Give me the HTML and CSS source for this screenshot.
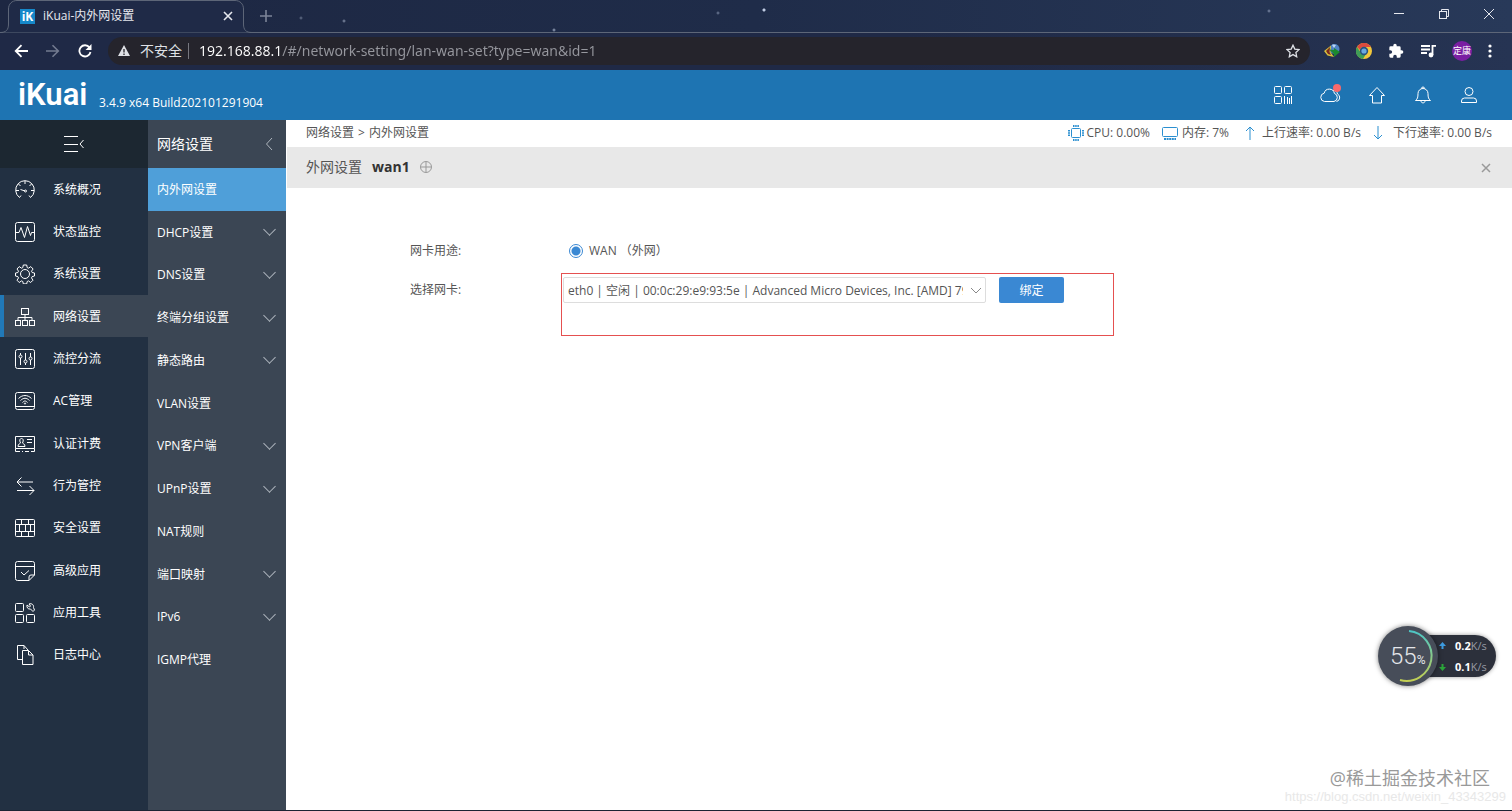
FILE: index.html
```html
<!DOCTYPE html>
<html lang="zh-CN">
<head>
    <meta charset="UTF-8">
    <meta name="viewport" content="width=device-width, initial-scale=1.0">
    <title>iKuai-内外网设置</title>
    <link rel="stylesheet" href="styles.css">
</head>
<body>
    <!-- browser frame -->
    <div class="tab-strip">
        <div class="tab">
            <svg class="tab-shape" width="252" height="33" viewBox="0 0 252 33"><path d="M0 32.500C6 32.500 8.500 30 8.500 24V9C8.500 4 12 .5 17 .5H235C240 .5 243.500 4 243.500 9V24C243.500 30 246 32.500 252 32.500" fill="#1f2a47" stroke="#5d6678"/></svg>
            <span class="favicon">iK</span>
            <span class="tab-title">iKuai-内外网设置</span>
            <button class="icon-btn" aria-label="关闭标签页"><svg width="10" height="10" viewBox="0 0 10 10"><path d="M1 1l8 8M9 1L1 9" stroke="#e6e8ee" stroke-width="1.600"/></svg></button>
        </div>
        <button class="icon-btn new-tab" aria-label="新标签页"><svg width="12" height="12" viewBox="0 0 12 12"><path d="M6 0v12M0 6h12" stroke="#7c8498" stroke-width="1.600"/></svg></button>
        <div class="window-btns">
            <button class="icon-btn" aria-label="最小化"><svg width="12" height="12" viewBox="0 0 12 12"><path d="M1 5.500h10" stroke="#e6e8ee"/></svg></button>
            <button class="icon-btn" aria-label="还原"><svg width="12" height="12" viewBox="0 0 12 12" fill="none" stroke="#e6e8ee"><rect x="1.500" y="3.500" width="7" height="7"/><path d="M3.500 3V1.500h7v7H9"/></svg></button>
            <button class="icon-btn" aria-label="关闭"><svg width="12" height="12" viewBox="0 0 12 12"><path d="M1 1l10 10M11 1L1 11" stroke="#e6e8ee"/></svg></button>
        </div>
    </div>
    <div class="toolbar">
        <div class="nav-btns">
            <button class="icon-btn" aria-label="后退"><svg width="14" height="14" viewBox="0 0 14 14" fill="none" stroke="#fff" stroke-width="1.800"><path d="M14 7H2M7.500 1.200L1.700 7l5.800 5.800"/></svg></button>
            <button class="icon-btn" aria-label="前进"><svg width="14" height="14" viewBox="0 0 14 14" fill="none" stroke="#737b90" stroke-width="1.600"><path d="M0 7h12M6.500 1.200L12.300 7l-5.800 5.800"/></svg></button>
            <button class="icon-btn" aria-label="重新加载"><svg width="14" height="14" viewBox="0 0 14 14"><path d="M11.500 3.500A5.600 5.600 0 1 0 12.500 8" fill="none" stroke="#fff" stroke-width="1.800"/><path d="M13.500 0v6h-6z" fill="#fff"/></svg></button>
        </div>
        <div class="address">
            <svg width="12" height="11" viewBox="0 0 12 11"><path d="M6 0l6 11H0z" fill="#dfe1e6"/><path d="M6 4v3.500M6 8.500V10" stroke="#25242c" stroke-width="1.300"/></svg>
            <span class="insecure">不安全</span>
            <input class="url" type="text" aria-label="地址" value="192.168.88.1/#/network-setting/lan-wan-set?type=wan&amp;id=1">
            <button class="icon-btn" aria-label="收藏"><svg width="14" height="14" viewBox="0 0 14 14"><path d="M7 1.200l1.800 3.900 4.200.5-3.100 2.900.8 4.200L7 10.600l-3.700 2.100.8-4.200L1 5.600l4.200-.5z" fill="none" stroke="#dfe1e6" stroke-width="1.300"/></svg></button>
        </div>
        <div class="extensions">
            <svg width="16" height="16" viewBox="0 0 16 16"><circle cx="10.500" cy="6" r="5" fill="#4f83c4"/><path d="M8 2c2-1 3 0 4 0l-2 3z" fill="#bcd6f2"/><path d="M7 2.500L0 8l3.500 4.500L10 14 6.500 9z" fill="#d9c23c"/><path d="M6 4L2 8l2 3 3 1-1.500-3z" fill="#7c2a20"/><path d="M5 6.500l5 .5V5l6 4-6 5v-3z" fill="#1c8a2e"/></svg>
            <svg width="16" height="16" viewBox="0 0 16 16"><circle cx="8" cy="8" r="8" fill="#f3c73b"/><path d="M1 4a8 8 0 0 1 14 0H8a4 4 0 0 0-4 3z" fill="#dd4b3e"/><path d="M1 4a8 8 0 0 0 6 12l3-5a4 4 0 0 1-5-1z" fill="#3f9e57"/><circle cx="8" cy="8" r="4.200" fill="#27527f"/><circle cx="8" cy="8" r="2.600" fill="#6aa9e0"/></svg>
            <svg width="16" height="16" viewBox="0 0 24 24"><path d="M20.500 11H19V7a2 2 0 0 0-2-2h-4V3.500a2.500 2.500 0 0 0-5 0V5H4a2 2 0 0 0-2 2v3.800h1.500a2.700 2.700 0 0 1 0 5.400H2V20a2 2 0 0 0 2 2h3.800v-1.500a2.700 2.700 0 0 1 5.400 0V22H17a2 2 0 0 0 2-2v-4h1.500a2.500 2.500 0 0 0 0-5z" fill="#fff"/></svg>
            <svg width="16" height="14" viewBox="0 0 16 14"><path d="M1 2h9M1 5.500h9M1 9h6M12.500 11V1.900H16" fill="none" stroke="#fff" stroke-width="1.800"/><circle cx="11" cy="11" r="2.400" fill="#fff"/></svg>
            <span class="avatar">定康</span>
            <button class="icon-btn" aria-label="菜单"><svg width="4" height="14" viewBox="0 0 4 14" fill="#fff"><circle cx="2" cy="2" r="1.600"/><circle cx="2" cy="7" r="1.600"/><circle cx="2" cy="12" r="1.600"/></svg></button>
        </div>
    </div>

    <header class="app-header">
        <span class="logo">iKuai</span>
        <span class="version">3.4.9 x64 Build202101291904</span>
        <nav class="header-icons">
            <a href="#" aria-label="二维码"><svg width="20" height="20" viewBox="0 0 20 20"><rect x="1.500" y="1.500" width="7" height="7" rx="1"/><rect x="11.500" y="1.500" width="7" height="7" rx="1"/><rect x="1.500" y="11.500" width="7" height="7" rx="1"/><path d="M11.500 11v8M14.500 12v7M16.500 13v6M18.500 11v8"/></svg></a>
            <a href="#" aria-label="云服务" class="cloud"><svg width="22" height="20" viewBox="0 0 22 20"><path d="M5.500 16.500a4.200 4.200 0 0 1-.3-8.300 5.200 5.200 0 0 1 10.200.2 4.200 4.200 0 0 1-.4 8.100z"/><path d="M14 5.500a4 4 0 0 1 4.500 3.500 4 4 0 0 1-1 7.500"/></svg></a>
            <a href="#" aria-label="首页"><svg width="20" height="20" viewBox="0 0 20 20"><path d="M10 2.500L2.500 10.500H5.500V18h9v-7.500h3z"/></svg></a>
            <a href="#" aria-label="通知"><svg width="20" height="20" viewBox="0 0 20 20"><path d="M2.500 15.500c2-1.500 2.500-3 2.500-7a5 5 0 0 1 10 0c0 4 .5 5.500 2.500 7zM8.500 3.500a1.500 1.500 0 1 1 3 0M8 16c0 2.500 4 2.500 4 0"/></svg></a>
            <a href="#" aria-label="用户"><svg width="20" height="20" viewBox="0 0 20 20"><circle cx="10" cy="6.500" r="4"/><path d="M2.500 17.500V16a3 3 0 0 1 3-3h9a3 3 0 0 1 3 3v1.500z"/></svg></a>
        </nav>
    </header>

    <div class="layout">
        <aside class="sidebar">
            <button class="collapse" aria-label="收起菜单"><svg width="22" height="18" viewBox="0 0 22 18"><path d="M1 1.500h14M1 9.500h14M1 16.500h14M20.500 5L17 9l3.500 4"/></svg></button>
            <ul class="menu">
                <li><a href="#"><svg width="20" height="20" viewBox="0 0 20 20"><path d="M4.500 17.500l1.500-2M15.500 17.500l-1.500-2M4.500 17.500a9.300 9.300 0 1 1 11 0M10 1v3M3.500 4l2 2M16.500 4l-2 2M1 10.500h3M16 10.500h3M5.500 9.500l4.500 1.500"/><circle cx="10.500" cy="11" r="1"/></svg>系统概况</a></li>
                <li><a href="#"><svg width="20" height="20" viewBox="0 0 20 20"><rect x=".5" y=".5" width="19" height="19" rx="2"/><path d="M1 10.500h3l2-5 3.500 10 3-11 3 9 1-3H19"/></svg>状态监控</a></li>
                <li><a href="#"><svg width="20" height="20" viewBox="0 0 20 20"><circle cx="10" cy="10" r="4.500"/><path d="M8.300 1h3.400l.5 2.600 1.300.6 2.300-1.600 2.300 2.400-1.600 2.200.6 1.300 2.400.5v3l-2.400.6-.6 1.300 1.500 2.300-2.300 2.300-2.200-1.600-1.300.6-.5 2.400H8.300l-.5-2.400-1.300-.6-2.300 1.600L2 16.200l1.500-2.300-.6-1.300L.5 12V9l2.400-.5.6-1.300L2 5l2.200-2.400 2.300 1.600 1.300-.6z"/></svg>系统设置</a></li>
                <li class="active"><a href="#"><svg width="20" height="20" viewBox="0 0 20 20"><rect x="6.500" y="1.500" width="7" height="6"/><rect x=".5" y="13.500" width="5" height="5"/><rect x="7.500" y="13.500" width="5" height="5"/><rect x="14.500" y="13.500" width="5" height="5"/><path d="M10 7.500v6M3 13.500v-3h14v3"/></svg>网络设置</a></li>
                <li><a href="#"><svg width="20" height="20" viewBox="0 0 20 20"><rect x=".5" y=".5" width="19" height="19" rx="2"/><path d="M5.500 4v2M5.500 9v7M10.500 4v7M10.500 14v2M15.500 4v4M15.500 11v5"/><circle cx="5.500" cy="7.500" r="1.500"/><circle cx="10.500" cy="12.500" r="1.500"/><circle cx="15.500" cy="9.500" r="1.500"/></svg>流控分流</a></li>
                <li><a href="#"><svg width="20" height="20" viewBox="0 0 20 20"><rect x=".5" y="1.500" width="19" height="17" rx="2"/><path d="M1 15.500h18M3.500 7.500c4-4 9-4 13 0M5.500 9.500c3-3 6-3 9 0M7.500 11.500c2-2 3-2 5 0"/><circle cx="10" cy="12.500" r=".6"/></svg>AC管理</a></li>
                <li><a href="#"><svg width="20" height="20" viewBox="0 0 20 20"><path d="M.5 14.500v-12h19v12H.5M.5 14.500v3h4.500M7 17.500h1M10 17.500h4M16 17.500h3.500v-3M12 5.500h5M12 8.500h5M3 12.500c0-3 2-2.500 2.500-3.500-1.500-3-.5-4.500 1-4.500s2.500 1.500 1 4.500c.5 1 2.500.5 2.500 3.500z"/></svg>认证计费</a></li>
                <li><a href="#"><svg width="20" height="20" viewBox="0 0 20 20"><path d="M18 6H2M6.500 1.500L2 6l4.500 4.500M2 14.500h17M14.500 10l4.500 4.500-4.500 4.500"/></svg>行为管控</a></li>
                <li><a href="#"><svg width="20" height="20" viewBox="0 0 20 20"><rect x=".5" y="1.500" width="19" height="17" rx="1"/><path d="M1 6.500h18M1 13.500h18M6.500 1.500v5M13.500 1.500v5M4.500 6.500v7M10.500 6.500v7M15.500 6.500v7M6.500 13.500v5M13.500 13.500v5"/></svg>安全设置</a></li>
                <li><a href="#"><svg width="20" height="20" viewBox="0 0 20 20"><path d="M14 19.500H2.500a2 2 0 0 1-2-2v-15a2 2 0 0 1 2-2h15a2 2 0 0 1 2 2V14L14 19.500V16a2 2 0 0 1 2-2h3.500M1 5.500h18M6 11l3 3 5-4.500"/></svg>高级应用</a></li>
                <li><a href="#"><svg width="20" height="20" viewBox="0 0 20 20"><rect x=".5" y=".5" width="8" height="8" rx="1"/><rect x=".5" y="11.500" width="8" height="8" rx="1"/><rect x="11.500" y="11.500" width="8" height="8" rx="1"/><path d="M12 2l2.500 2 1-1-1.500-2c3-1 5 1 4.500 3.500L19.500 7 18 8.500 15.500 6c-2.500.5-4-1.500-3.500-4z"/></svg>应用工具</a></li>
                <li><a href="#"><svg width="20" height="20" viewBox="0 0 20 20"><path d="M7.500 14.500h-5v-14h6.500l4 4.500M9 .5V4M7.500 5.500h6l4.500 4.500v9.500H7.500zM13.500 5.500V10H18"/></svg>日志中心</a></li>
            </ul>
        </aside>

        <aside class="submenu">
            <div class="submenu-title">网络设置<svg width="8" height="12" viewBox="0 0 8 12"><path d="M7 0L1.500 6 7 12"/></svg></div>
            <ul class="menu">
                <li class="active"><a href="#">内外网设置</a></li>
                <li class="more"><a href="#">DHCP设置</a></li>
                <li class="more"><a href="#">DNS设置</a></li>
                <li class="more"><a href="#">终端分组设置</a></li>
                <li class="more"><a href="#">静态路由</a></li>
                <li><a href="#">VLAN设置</a></li>
                <li class="more"><a href="#">VPN客户端</a></li>
                <li class="more"><a href="#">UPnP设置</a></li>
                <li><a href="#">NAT规则</a></li>
                <li class="more"><a href="#">端口映射</a></li>
                <li class="more"><a href="#">IPv6</a></li>
                <li><a href="#">IGMP代理</a></li>
            </ul>
        </aside>

        <main class="content">
            <div class="status-bar">
                <div class="breadcrumb"><a href="#">网络设置</a><span>&gt;</span><span>内外网设置</span></div>
                <div class="stats">
                    <span class="stat cpu"><svg width="16" height="16" viewBox="0 0 16 16"><rect x="3.500" y="3.500" width="9" height="9" rx="1"/><path d="M5 1h6M5 15h6M1 5v6M15 5v6" stroke-dasharray="1.500 .7" stroke-width="2"/></svg>CPU: 0.00%</span>
                    <span class="stat mem"><svg width="16" height="14" viewBox="0 0 16 14"><rect x=".5" y="1.500" width="15" height="9" rx="1"/><path d="M2 13h12" stroke-width="2" stroke-dasharray="2 .6"/></svg>内存: 7%</span>
                    <span class="stat up"><svg width="10" height="14" viewBox="0 0 10 14"><path d="M5 14V1M1 5l4-4 4 4"/></svg>上行速率: 0.00 B/s</span>
                    <span class="stat down"><svg width="10" height="14" viewBox="0 0 10 14"><path d="M5 0v13M1 9l4 4 4-4"/></svg>下行速率: 0.00 B/s</span>
                </div>
            </div>
            <div class="page-title">
                <span>外网设置</span>
                <strong>wan1</strong>
                <svg width="12" height="12" viewBox="0 0 12 12"><circle cx="6" cy="6" r="5.500"/><path d="M6 1v10M1 6h10"/></svg>
                <button class="icon-btn" aria-label="关闭"><svg width="10" height="10" viewBox="0 0 10 10"><path d="M1 1l8 8M9 1L1 9" stroke-width="1.500"/></svg></button>
            </div>
            <form class="wan-form">
                <div class="form-row">
                    <span class="label">网卡用途:</span>
                    <label class="radio"><input type="radio" name="usage" checked>WAN （外网）</label>
                </div>
                <div class="form-row">
                    <label class="label" for="nic">选择网卡:</label>
                    <div class="bind-box">
                        <select id="nic" class="nic">
                            <option>eth0 | 空闲 | 00:0c:29:e9:93:5e | Advanced Micro Devices, Inc. [AMD] 79c970</option>
                        </select>
                        <button type="button" class="bind-btn">绑定</button>
                    </div>
                </div>
            </form>
        </main>
    </div>

    <!-- floating speed monitor -->
    <div class="monitor">
        <div class="gauge">
            <svg width="60" height="60" viewBox="0 0 60 60" fill="none" stroke-width="2"><defs><linearGradient id="ring" x1="0" y1="0" x2="0" y2="1"><stop offset="0" stop-color="#4cc5c5"/><stop offset="1" stop-color="#c3cf52"/></linearGradient></defs><path d="M31 5a25 25 0 1 1-9 49" stroke="url(#ring)"/></svg>
            <span class="percent">55<small>%</small></span>
        </div>
        <div class="rates">
            <div><svg width="7" height="8" viewBox="0 0 7 8"><path d="M3.500 0L7 4H4.500v3h-2V4H0z" fill="#3d9be0"/></svg><b>0.2</b>K/s</div>
            <div><svg width="7" height="8" viewBox="0 0 7 8"><path d="M3.500 8L7 4H4.500V1h-2v3H0z" fill="#2ba53a"/></svg><b>0.1</b>K/s</div>
        </div>
    </div>

    <div class="watermark">
        <div class="community">@稀土掘金技术社区</div>
        <div class="blog-url">https://blog.csdn.net/weixin_43343299</div>
    </div>
</body>
</html>
```
FILE: styles.css
```css
* {
    box-sizing: border-box;
}
body {
    margin: 0;
    min-height: 100vh;
    display: flex;
    flex-direction: column;
    position: relative;
    font-family: "Open Sans", "Noto Sans CJK SC", sans-serif;
    font-size: 12px;
    line-height: 18px;
    color: #555;
    background: #fff;
    border-bottom: 1px solid #1b2333;
}
button, input, select {
    font-family: inherit;
    font-size: inherit;
}
a {
    color: inherit;
    text-decoration: none;
}
svg {
    flex: none;
    display: block;
}
ul {
    list-style: none;
    margin: 0;
    padding: 0;
}
.icon-btn {
    display: flex;
    padding: 0;
    border: none;
    background: none;
    cursor: pointer;
}

/* browser frame */
.tab-strip {
    height: 33px;
    display: flex;
    align-items: center;
    border-bottom: 1px solid #5d6678;
    background:
        radial-gradient(circle at 301px 18px, #6c7890 0, transparent 2px),
        radial-gradient(circle at 344px 21px, #8c98b0 0, transparent 2px),
        radial-gradient(circle at 554px 30px, #a5b1c9 0, transparent 2px),
        radial-gradient(circle at 718px 13px, #7885a0 0, transparent 2px),
        radial-gradient(circle at 764px 10px, #bfcbe3 1px, transparent 2px),
        radial-gradient(circle at 1269px 11px, #8491ad 0, transparent 2px),
        linear-gradient(90deg, #1d2742, #1f2c49 50%, #283959);
}
.tab {
    position: relative;
    width: 252px;
    height: 33px;
    padding: 0 19px 0 20px;
    display: flex;
    align-items: center;
    gap: 8px;
    color: #e6e8ee;
}
.tab-shape {
    position: absolute;
    left: 0;
    top: 0;
}
.tab .favicon, .tab .tab-title, .tab .icon-btn {
    position: relative;
}
.favicon {
    width: 15px;
    height: 15px;
    background: #1688c9;
    color: #fff;
    font-weight: bold;
    line-height: 15px;
    text-align: center;
}
.tab-title {
    flex: 1;
}
.new-tab {
    margin-left: 8px;
}
.window-btns {
    display: flex;
    gap: 33px;
    margin-left: auto;
    padding: 0 17px 4px 0;
}
.toolbar {
    height: 37px;
    display: flex;
    align-items: center;
    background: linear-gradient(90deg, #1f2946, #1f2946 60%, #263453);
    padding: 0 20px 2px 14px;
}
.nav-btns {
    display: flex;
    gap: 18px;
    width: 94px;
}
.address {
    flex: 1;
    height: 28px;
    display: flex;
    align-items: center;
    gap: 10px;
    padding: 0 10px;
    border-radius: 14px;
    background: #25242c;
    color: #dfe1e6;
    font-size: 14px;
}
.insecure {
    padding-right: 6px;
    border-right: 1px solid #77777f;
    line-height: 16px;
}
.url {
    flex: 1;
    padding: 0;
    border: none;
    outline: none;
    color: #96979e;
    font-family: "Noto Sans", sans-serif;
    /* host part is brighter than the path */
    background: linear-gradient(90deg, #fff 83px, #96979e 83px);
    -webkit-background-clip: text;
    background-clip: text;
    -webkit-text-fill-color: transparent;
}
.extensions {
    display: flex;
    align-items: center;
    gap: 16px;
    padding-left: 14px;
}
.avatar {
    width: 20px;
    height: 20px;
    border-radius: 50%;
    background: #7a1fa2;
    color: #fff;
    font-size: 9px;
    line-height: 20px;
    text-align: center;
    white-space: nowrap;
}

/* app header */
.app-header {
    height: 50px;
    display: flex;
    align-items: center;
    padding: 0 33px 0 18px;
    color: #fff;
    background: #1e74b2;
}
.logo {
    width: 81px;
    font-family: Roboto, "Open Sans", sans-serif;
    font-size: 31px;
    font-weight: 600;
    line-height: 50px;
}
.version {
    padding-top: 16px;
}
.header-icons {
    display: flex;
    gap: 26px;
    margin-left: auto;
}
.header-icons svg {
    fill: none;
    stroke: #fff;
}
.cloud {
    position: relative;
}
.cloud::after {
    content: "";
    position: absolute;
    right: 0;
    top: -1px;
    width: 8px;
    height: 8px;
    border-radius: 50%;
    background: #f8696b;
}

/* menus */
.layout {
    flex: 1;
    display: flex;
}
.sidebar {
    width: 148px;
    background: #223042;
    color: #fff;
}
.collapse {
    width: 100%;
    height: 48px;
    display: flex;
    align-items: center;
    justify-content: center;
    border: none;
    background: #1c2731;
}
.sidebar svg {
    fill: none;
    stroke: #fff;
}
.menu {
    display: flex;
    flex-direction: column;
}
.menu li {
    flex: 1;
    display: flex;
}
.menu a {
    flex: 1;
    display: flex;
    align-items: center;
    padding-top: 1px;
}
.sidebar .menu {
    height: 508px;
}
.sidebar .menu a {
    gap: 18px;
    padding-left: 11px;
    border-left: 4px solid transparent;
}
.sidebar .active a {
    background: #3b4654;
    border-left-color: #2179b8;
}
.submenu {
    width: 138px;
    background: #3b4654;
    color: #fff;
}
.submenu-title {
    height: 48px;
    display: flex;
    align-items: center;
    justify-content: space-between;
    padding: 0 13px 0 9px;
    font-size: 14px;
}
.submenu-title svg {
    fill: none;
    stroke: #aeb5bd;
}
.submenu .menu {
    height: 513px;
}
.submenu .menu a {
    padding-left: 9px;
    padding-right: 11px;
}
.submenu .active a {
    background: #4f9fd9;
}
.more a::after {
    content: "";
    width: 8px;
    height: 8px;
    margin: 0 1px 6px auto;
    border: solid #aeb5bd;
    border-width: 0 1px 1px 0;
    transform: rotate(45deg);
}

/* content */
.content {
    flex: 1;
    min-width: 0;
}
.status-bar {
    height: 27px;
    display: flex;
    align-items: center;
    justify-content: space-between;
    padding: 0 20px 2px;
}
.breadcrumb {
    display: flex;
    gap: 4px;
}
.stats {
    display: flex;
    gap: 12px;
}
.stat {
    display: flex;
    align-items: center;
    gap: 4px;
}
.stat svg {
    fill: none;
    stroke: #2b8fd0;
}
.cpu {
    gap: 2px;
}
.up {
    gap: 7px;
    margin-left: 4px;
}
.down {
    gap: 10px;
}
.page-title {
    height: 41px;
    display: flex;
    align-items: center;
    gap: 10px;
    margin-left: 1px;
    padding: 0 21px 2px 19px;
    background: #e8e8e8;
    font-size: 14px;
}
.page-title strong {
    color: #333;
}
.page-title svg {
    fill: none;
    stroke: #999;
}
.page-title .icon-btn {
    margin-left: auto;
    padding-top: 2px;
}
.wan-form {
    padding: 50px 20px 0 124px;
}
.form-row {
    display: flex;
}
.label {
    width: 151px;
    line-height: 26px;
}
.radio {
    display: flex;
    align-items: center;
    gap: 6px;
    height: 26px;
    margin-bottom: 9px;
    padding-left: 8px;
}
.radio input {
    appearance: none;
    width: 14px;
    height: 14px;
    margin: 0;
    border: 1px solid #3a88d3;
    border-radius: 50%;
    background: radial-gradient(circle, #3a88d3 4px, #fff 5px);
}
.bind-box {
    width: 553px;
    height: 63px;
    display: flex;
    align-items: flex-start;
    gap: 13px;
    padding: 3px 1px;
    border: 1px solid #e55050;
}
.form-row + .form-row .label {
    padding-top: 4px;
}
.nic {
    appearance: none;
    width: 423px;
    height: 26px;
    padding: 0 22px 0 4px;
    border: 1px solid #ddd;
    border-radius: 2px;
    color: #555;
    background: #fff url("data:image/svg+xml,%3Csvg xmlns='http://www.w3.org/2000/svg' width='12' height='7'%3E%3Cpath d='M1 1l5 5 5-5' fill='none' stroke='%23888'/%3E%3C/svg%3E") no-repeat right 3px center;
}
.bind-btn {
    width: 65px;
    height: 26px;
    padding: 0;
    border: none;
    border-radius: 2px;
    color: #fff;
    background: #3a88d3;
}

/* floating speed monitor */
.monitor {
    position: absolute;
    right: 16px;
    bottom: 124px;
    display: flex;
    align-items: center;
}
.gauge {
    position: relative;
    z-index: 1;
    width: 60px;
    height: 60px;
    border-radius: 50%;
    background: #474d59;
    box-shadow: 0 0 5px rgba(0, 0, 0, 0.5);
}
.percent {
    position: absolute;
    left: 12px;
    top: 16px;
    color: #e4e6ea;
    font-family: Roboto, sans-serif;
    font-size: 24px;
    font-weight: 300;
    line-height: 28px;
}
.percent small {
    font-size: 12px;
    font-weight: 400;
}
.rates {
    width: 88px;
    height: 42px;
    margin-left: -30px;
    padding-left: 31px;
    border-radius: 0 21px 21px 0;
    background: #2c303b;
    box-shadow: 0 0 4px rgba(0, 0, 0, 0.4);
    color: #969aa3;
    font-size: 11px;
    line-height: 21px;
}
.rates div {
    display: flex;
    align-items: center;
}
.rates svg {
    margin-right: 9px;
}
.rates b {
    color: #fff;
}

.watermark {
    position: absolute;
    right: 6px;
    bottom: 4px;
    text-align: right;
}
.community {
    padding-right: 16px;
    color: #999;
    font-size: 18px;
    line-height: 20px;
}
.blog-url {
    color: #e8e8e8;
    font-family: "Liberation Sans", sans-serif;
    font-size: 13px;
}
```
